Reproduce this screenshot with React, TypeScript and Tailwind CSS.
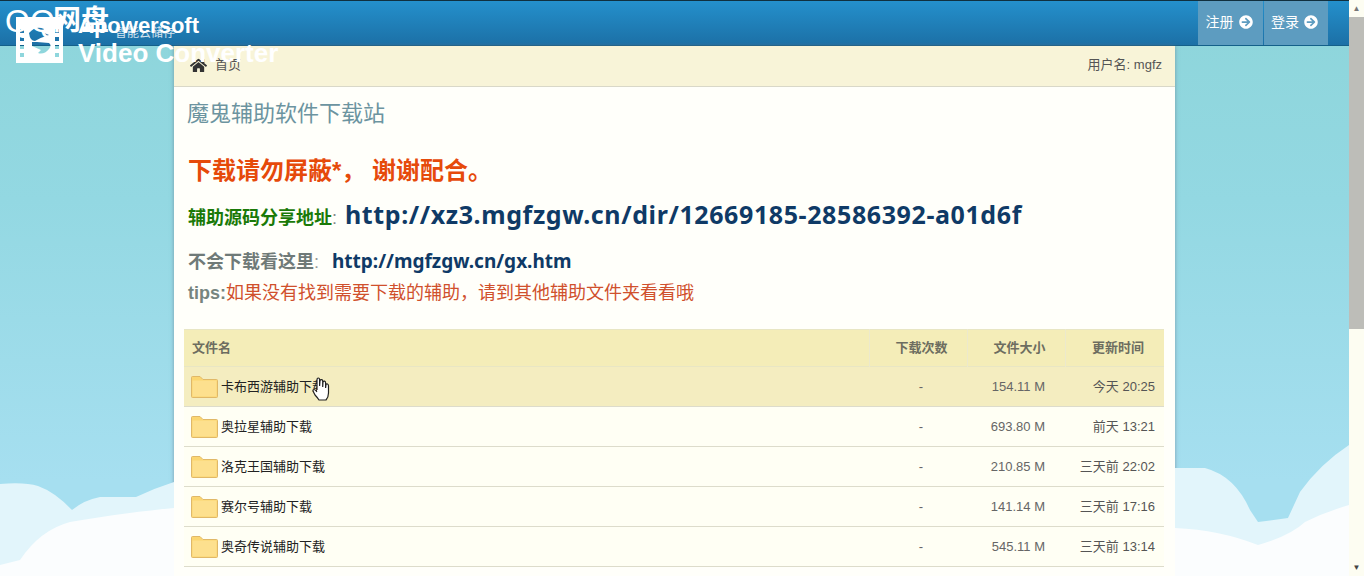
import { FaHome, FaArrowCircleRight } from "react-icons/fa";

const files = [
  { name: "卡布西游辅助下载", size: "154.11 M", time: "今天 20:25", hover: true },
  { name: "奥拉星辅助下载", size: "693.80 M", time: "前天 13:21" },
  { name: "洛克王国辅助下载", size: "210.85 M", time: "三天前 22:02" },
  { name: "赛尔号辅助下载", size: "141.14 M", time: "三天前 17:16" },
  { name: "奥奇传说辅助下载", size: "545.11 M", time: "三天前 13:14" },
];

const cjk = "font-['Liberation_Sans','Noto_Sans_CJK_SC',sans-serif]";
const linkFont = "font-['Noto_Sans','Noto_Sans_CJK_SC',sans-serif]";

function Folder() {
  return (
    <svg width="27" height="22" viewBox="0 0 27 22" className="shrink-0">
      <path d="M0.5 3V1.5Q0.5 0.5 1.5 0.5H9L12 3.5H25.5Q26.5 3.5 26.5 4.5V20.5Q26.5 21.5 25.5 21.5H1.5Q0.5 21.5 0.5 20.5Z" fill="#fbd671" stroke="#e0b868" />
      <rect x="1.500" y="4.500" width="24" height="16" fill="#fde08e" />
    </svg>
  );
}

function HandCursor() {
  return (
    <svg width="18" height="24" viewBox="0 0 18 24" className="absolute left-[312px] top-[377px]">
      <path d="M5 13V3Q5 1 6.300 1T7.600 3V9L8 3.500Q8.300 2.500 9.500 2.600T10.700 4V10L11 5Q11.400 4 12.500 4.200T13.600 6V11L14 7.500Q14.500 6.600 15.500 7T16.500 9V16Q16.500 20 14 23H7Q5 20 3 18L1 14Q0.800 12.500 2 12.500T5 15" fill="#fff" stroke="#222" strokeWidth="1.200" />
    </svg>
  );
}

function Clouds() {
  return (
    <svg width="1349" height="136" viewBox="0 0 1349 136" className="absolute left-0 top-[440px]">
      <path d="M0 44Q25 42 38 46Q55 52 72 70Q84 60 100 57H136Q155 48 174 42V136H0Z" fill="#e2f5fb" />
      <path d="M20 120Q40 90 70 82Q130 72 174 68V136H0V125Z" fill="#fbfdfe" />
      <path d="M1175 28H1205Q1235 36 1250 70L1258 82L1288 78L1300 52Q1320 24 1349 5V136H1175Z" fill="#e2f5fb" />
      <path d="M1175 88Q1220 90 1258 105Q1290 96 1305 82Q1325 72 1349 65V136H1175Z" fill="#fbfdfe" />
    </svg>
  );
}

function FilmIcon() {
  return (
    <svg width="47" height="46" viewBox="0 0 47 46" className="absolute left-[16px] top-[17px]">
      <path
        fillRule="evenodd"
        fill="#fff"
        d="M0 0H47V46H0ZM4 12H8V16H4ZM4 20H8V24H4ZM4 28H8V32H4ZM4 36H8V40H4ZM39 12H43V16H39ZM39 20H43V24H39ZM39 28H43V32H39ZM39 36H43V40H39ZM13 16Q20 8 28 12L26 15L33 18Q26 20 19 24Q14 24 13 16ZM16 25H21L33 26Q36 28 33 32Q28 38 22 36L25 33L16 29Z"
      />
    </svg>
  );
}

export default function App() {
  return (
    <div className={`relative h-[576px] w-[1364px] overflow-hidden ${cjk}`}>
      <div className="flex h-full w-full">
        <div className="relative h-full w-[1349px] overflow-hidden bg-[linear-gradient(to_bottom,#8dd5da_0px,#93d8e2_200px,#a6dff0_480px)]">
          <Clouds />

          <header className="flex h-[46px] justify-end border-t border-b border-t-[#10303f] border-b-[#14608a] bg-[linear-gradient(to_bottom,#2490cc,#1c70a6)] pr-[21px]">
            <button className="flex w-[65px] items-center justify-center gap-[5px] bg-[#5d9cc0] pb-[2px] pr-[3px] text-[14px] text-white">
              注册 <FaArrowCircleRight className="text-[14px]" />
            </button>
            <button className="ml-px flex w-[64px] items-center justify-center gap-[5px] bg-[#5d9cc0] pb-[2px] pr-[3px] text-[14px] text-white">
              登录 <FaArrowCircleRight className="text-[14px]" />
            </button>
          </header>

          <main className="ml-[174px] min-h-[530px] w-[1001px] bg-[#fffffa] shadow-[0_0_4px_rgba(90,110,130,0.6)]">
            <div className="flex h-[41px] items-center justify-between border-b border-[#d9d8c8] bg-[#f8f4d8] pb-[2px] pl-[16px] pr-[13px] text-[13px] text-[#555]">
              <div className="flex items-center gap-[8px]">
                <FaHome className="text-[17px] text-[#333]" />
                <span>首页</span>
              </div>
              <span>用户名: mgfz</span>
            </div>

            <div className="px-[10px]">
              <h1 className="pl-[3px] pt-[13px] text-[22px] leading-[28px] text-[#6c94a0]">魔鬼辅助软件下载站</h1>

              <div className="pl-[4px]">
                <p className="mt-[27px] text-[24px] font-bold leading-[32px] text-[#e64a0a]">下载请勿屏蔽*， 谢谢配合。</p>
                <p className="mt-[11px] flex items-baseline leading-[32px]">
                  <span className="text-[18px] font-bold text-[#1a7a08]">辅助源码分享地址</span>
                  <span className="text-[18px] text-[#888]">:</span>
                  <span className={`ml-[8px] text-[25px] font-bold tracking-[0.6px] text-[#0f3a66] ${linkFont}`}>http://xz3.mgfzgw.cn/dir/12669185-28586392-a01d6f</span>
                </p>
                <p className="mt-[13px] flex items-baseline leading-[28px]">
                  <span className="text-[18px] font-bold text-[#6f7a78]">不会下载看这里</span>
                  <span className="text-[18px] text-[#999]">:</span>
                  <span className={`ml-[13px] text-[19px] font-bold text-[#0f3a66] ${linkFont}`}>http://mgfzgw.cn/gx.htm</span>
                </p>
                <p className="mt-[3px] leading-[28px]">
                  <span className="text-[18px] font-bold text-[#76857f]">tips:</span>
                  <span className="text-[18px] text-[#d0502c]">如果没有找到需要下载的辅助，请到其他辅助文件夹看看哦</span>
                </p>
              </div>

              <table className="mt-[21px] w-[980px] table-fixed border-collapse text-[13px]">
                <thead>
                  <tr className="h-[37px] border-b border-t border-[#e8e6c4] bg-[#f4edb8] font-bold text-[#6d6d60]">
                    <th className="pl-[8px] text-left">文件名</th>
                    <th className="w-[98px] border-l border-[#ece9cc] pr-[19px] text-right">下载次数</th>
                    <th className="w-[98px] border-l border-[#ece9cc] pr-[19px] text-right">文件大小</th>
                    <th className="w-[99px] border-l border-[#ece9cc] pr-[20px] text-right">更新时间</th>
                  </tr>
                </thead>
                <tbody>
                  {files.map((f) => (
                    <tr key={f.name} className={`h-[40px] border-b border-[#dddccb] ${f.hover ? "bg-[#f4edc0]" : "bg-[#fffff4]"}`}>
                      <td className="pl-[7px] text-[#222]">
                        <div className="flex items-center gap-[3px]">
                          <Folder />
                          <span>{f.name}</span>
                        </div>
                      </td>
                      <td className="pr-[44px] text-right text-[#666]">-</td>
                      <td className="pr-[20px] text-right text-[#666]">{f.size}</td>
                      <td className="pr-[9px] text-right text-[#555]">{f.time}</td>
                    </tr>
                  ))}
                </tbody>
              </table>
            </div>
          </main>

          {/* converter watermark over the header */}
          <div className="absolute left-[5px] top-[1px] text-[32px] leading-[40px] text-white">QQ</div>
          <FilmIcon />
          <div className="absolute left-[53px] top-[5px] text-[28px] font-bold leading-[32px] text-white">网盘</div>
          <div className="absolute left-[78px] top-[13px] text-[22px] font-bold leading-[26px] text-white">Apowersoft</div>
          <div className="absolute left-[78px] top-[38px] text-[26px] font-bold leading-[30px] text-white">Video Converter</div>
          <div className="absolute left-[115px] top-[26px] text-[12px] leading-[14px] text-white/80">智能云储存</div>
          <HandCursor />
        </div>

        <div className="flex h-full w-[15px] flex-col bg-[#fdfdf2]">
          <div className="flex h-[17px] items-center justify-center text-[8px] text-[#777]">▲</div>
          <div className="h-[312px] w-full bg-[#bdbdb8]" />
          <div className="mt-auto flex h-[17px] items-center justify-center text-[8px] text-[#444]">▼</div>
        </div>
      </div>
    </div>
  );
}
